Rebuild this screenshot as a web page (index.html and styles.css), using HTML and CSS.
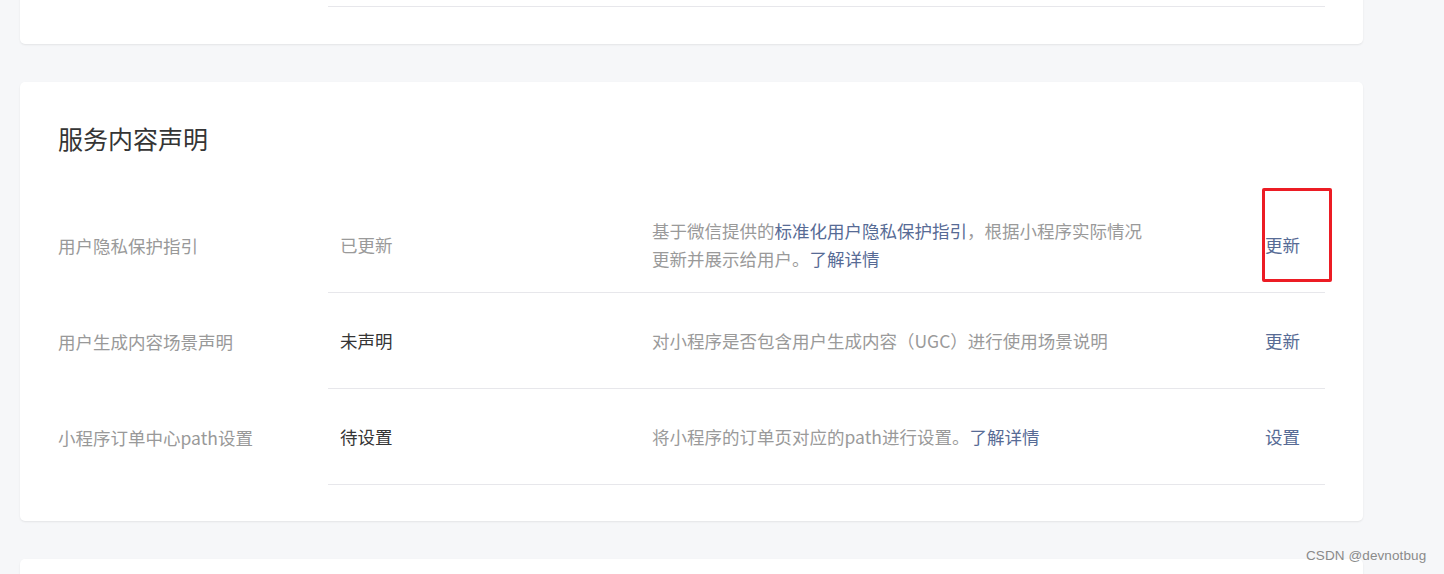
FILE: index.html
```html
<!DOCTYPE html>
<html lang="zh-CN">
<head>
<meta charset="utf-8">
<title>服务内容声明</title>
<link rel="stylesheet" href="styles.css">
</head>
<body>
<div class="page">
  <section class="card card-prev">
    <div class="table">
      <div class="row row-stub">
        <div class="label"></div>
        <div class="cells"></div>
      </div>
    </div>
  </section>

  <section class="card">
    <h2 class="card-title">服务内容声明</h2>
    <div class="table">
      <div class="row">
        <div class="label">用户隐私保护指引</div>
        <div class="cells">
          <div class="status muted">已更新</div>
          <div class="desc">基于微信提供的<a class="link">标准化用户隐私保护指引</a>，根据小程序实际情况<br>更新并展示给用户。<a class="link">了解详情</a></div>
          <div class="action highlighted"><a class="link">更新</a><span class="mark"></span></div>
        </div>
      </div>
      <div class="row">
        <div class="label">用户生成内容场景声明</div>
        <div class="cells">
          <div class="status">未声明</div>
          <div class="desc">对小程序是否包含用户生成内容（UGC）进行使用场景说明</div>
          <div class="action"><a class="link">更新</a></div>
        </div>
      </div>
      <div class="row">
        <div class="label">小程序订单中心path设置</div>
        <div class="cells">
          <div class="status">待设置</div>
          <div class="desc">将小程序的订单页对应的path进行设置。<a class="link">了解详情</a></div>
          <div class="action"><a class="link">设置</a></div>
        </div>
      </div>
    </div>
  </section>

  <section class="card card-next"></section>
</div>
<div class="watermark">CSDN @devnotbug</div>
</body>
</html>
```

FILE: styles.css
```css
html, body {
  margin: 0;
  padding: 0;
  background: #f6f7f9;
  height: 574px;
  overflow: hidden;
}

body {
  font-family: "Noto Sans CJK SC", "Noto Sans", sans-serif;
  font-size: 17.5px;
  color: #353535;
}

.page {
  width: 1343px;
  margin-left: 20px;
  display: flex;
  flex-direction: column;
  gap: 38px;
}

.card {
  background: #fff;
  border-radius: 5px;
  box-shadow: 0 1px 2px rgba(0, 0, 0, 0.08);
  padding: 38px 38px 36px 38px;
}

.card-prev {
  margin-top: -38px;
  padding-top: 0;
  padding-bottom: 37px;
}

.card-prev .row-stub {
  height: 45px;
}

.card-next {
  height: 60px;
}

.card-title {
  margin: 0 0 41px 0;
  font-size: 25px;
  font-weight: 400;
  line-height: 36px;
  color: #353535;
}

.table {
  display: flex;
  flex-direction: column;
}

.row {
  display: grid;
  grid-template-columns: 270px 1fr;
  height: 96px;
}

.label {
  display: flex;
  align-items: center;
  color: #999;
}

.cells {
  display: grid;
  grid-template-columns: 312px 613px 72px;
  align-items: center;
  border-bottom: 1px solid #e7e7eb;
}

.status {
  padding-left: 12px;
  color: #353535;
}

.status.muted {
  color: #9a9a9a;
}

.desc {
  padding-left: 12px;
  color: #9a9a9a;
  line-height: 28px;
}

.action {
  padding-left: 12px;
  position: relative;
}

.link {
  color: #576b95;
  text-decoration: none;
}

.mark {
  position: absolute;
  left: 9px;
  top: -44px;
  width: 64px;
  height: 88px;
  border: 3px solid #ec1c24;
  border-radius: 2px;
}

.watermark {
  position: absolute;
  left: 1306px;
  top: 548px;
  font-family: "Liberation Sans", Arial, sans-serif;
  font-size: 13.5px;
  color: #8a8a8a;
  letter-spacing: 0.1px;
}
```
